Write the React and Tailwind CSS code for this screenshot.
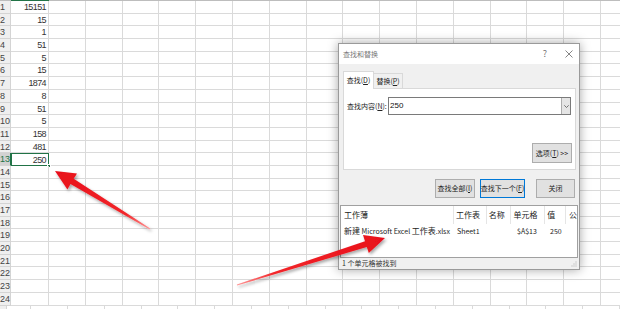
import React from "react";

const values = [15151, 15, 1, 51, 5, 15, 1874, 8, 51, 5, 158, 481, 250];
const rows = Array.from({ length: 24 }, (_, i) => i + 1);
const cols = Array.from({ length: 16 }, (_, i) => i);

const cjk = { fontFamily: '"Noto Sans CJK SC", "Liberation Sans", sans-serif' };

function Sheet() {
  return (
    <div className="flex flex-col">
      {/* column header strip, mostly cut off */}
      <div className="flex h-[1px] bg-[#bdbdbd]">
        <div className="w-[11px]" />
        <div className="w-[38px] bg-[#217346]" />
      </div>
      {rows.map((r) => {
        const sel = r === 13;
        return (
          <div key={r} className="flex h-[12.7px] shrink-0">
            <div
              className={`w-[11px] shrink-0 border-b border-r border-[#d4d4d4] text-[9px] leading-[12px] whitespace-nowrap ${
                sel ? "bg-[#d2d2d2] text-[#217346] border-r-[#217346]" : "bg-[#efefef] text-[#444]"
              }`}
            >
              {r}
            </div>
            <div
              className={`relative w-[38px] shrink-0 text-right pr-[2px] text-[9px] leading-[12px] tracking-[-0.6px] text-[#333] ${
                sel ? "border-[1.5px] border-[#217346]" : "border-b border-r border-[#dadada]"
              }`}
            >
              {values[r - 1] ?? ""}
              {sel && <div className="absolute -right-[3px] -bottom-[3px] w-[4px] h-[4px] bg-[#217346] border border-white" />}
            </div>
            {cols.map((c) => (
              <div key={c} className="w-[36.8px] shrink-0 border-b border-r border-[#dadada]" />
            ))}
          </div>
        );
      })}
      <div className="flex h-[12px]">
        <div className="w-[11px] bg-[#efefef] border-r border-[#d4d4d4]" />
        <div className="w-[38px] border-r border-[#dadada]" />
        {cols.map((c) => (
          <div key={c} className="w-[36.8px] shrink-0 border-r border-[#dadada]" />
        ))}
      </div>
    </div>
  );
}

function Btn({ children, primary, className = "" }) {
  return (
    <div
      className={`flex items-center justify-center h-[19px] whitespace-nowrap text-[7px] text-[#222] bg-[#e1e1e1] border ${
        primary ? "border-[#0078d7] border-[1.5px]" : "border-[#adadad]"
      } ${className}`}
    >
      {children}
    </div>
  );
}

function Dialog() {
  return (
    <div
      style={cjk}
      className="absolute left-[338px] top-[43px] w-[242px] h-[227px] flex flex-col bg-[#f0f0f0] border border-[#9a9a9a] shadow-[0_0_10px_rgba(0,0,0,0.35)]"
    >
      <div className="h-[20px] bg-white flex items-center pl-[4px] pr-[6px] text-[7px] text-[#777]">
        <span>查找和替换</span>
        <span className="ml-auto mr-[18px] text-[9px] text-[#777]">?</span>
        <svg width="8" height="8" viewBox="0 0 8 8" stroke="#777" strokeWidth="0.9">
          <path d="M0.5 0.5 L7.5 7.5 M7.5 0.5 L0.5 7.5" />
        </svg>
      </div>
      <div className="flex flex-col pl-[4px] pr-[3px]">
        <div className="flex items-end h-[24px]">
          <div className="relative z-10 h-[18px] w-[31px] whitespace-nowrap bg-white border border-b-0 border-[#d9d9d9] text-[7px] text-[#222] flex items-center justify-center -mb-[1px]">
            查找(<span className="underline">D</span>)
          </div>
          <div className="h-[15px] w-[29px] whitespace-nowrap border border-l-0 border-b-0 border-[#d9d9d9] text-[7px] text-[#222] flex items-center justify-center">
            替换(<span className="underline">P</span>)
          </div>
        </div>
        <div className="h-[82px] bg-white border border-[#d9d9d9] flex flex-col">
          <div className="flex items-center mt-[8px] pl-[3px] pr-[4px]">
            <span className="text-[7px] text-[#222] w-[41px] whitespace-nowrap">
              查找内容(<span className="underline">N</span>):
            </span>
            <div className="flex-1 h-[18px] border border-[#7a7a7a] flex items-center">
              <span className="pl-[1px] text-[8px] text-[#111]" style={{ fontFamily: '"Liberation Sans", sans-serif' }}>
                250
              </span>
              <div className="ml-auto h-full w-[9px] bg-[#e5e5e5] border-l border-[#adadad] flex items-center justify-center">
                <svg width="5" height="3" viewBox="0 0 5 3" fill="none" stroke="#555" strokeWidth="0.8">
                  <path d="M0.3 0.3 L2.5 2.5 L4.7 0.3" />
                </svg>
              </div>
            </div>
          </div>
          <div className="flex-1" />
          <div className="flex justify-end pr-[3px] pb-[6px]">
            <Btn className="w-[40px] h-[20px]">
              选项(<span className="underline">T</span>)&nbsp;&gt;&gt;
            </Btn>
          </div>
        </div>
        <div className="flex items-center justify-end gap-[5px] mt-[9px] pr-[1px]">
          <Btn className="w-[40px]">
            查找全部(<span className="underline">I</span>)
          </Btn>
          <Btn primary className="w-[45px] text-[6.5px]">
            查找下一个(<span className="underline">F</span>)
          </Btn>
          <Btn className="w-[39px] ml-[6px]">关闭</Btn>
        </div>
      </div>
      <div className="mt-[7px] mx-[1px] h-[53px] bg-white border border-[#a0a0a0] flex flex-col text-[8px] text-[#222]">
        <div className="flex h-[18px] items-center whitespace-nowrap">
          <div className="w-[114px] pl-[3px] border-r border-[#e5e5e5] h-full flex items-center">工作薄</div>
          <div className="w-[33px] pl-[2px] border-r border-[#e5e5e5] h-full flex items-center">工作表</div>
          <div className="w-[25px] pl-[2px] border-r border-[#e5e5e5] h-full flex items-center">名称</div>
          <div className="w-[34px] pl-[2px] border-r border-[#e5e5e5] h-full flex items-center">单元格</div>
          <div className="w-[21px] pl-[2px] border-r border-[#e5e5e5] h-full flex items-center">值</div>
          <div className="pl-[3px] h-full flex items-center">公</div>
        </div>
        <div className="flex h-[14px] items-center text-[7px] whitespace-nowrap">
          <div className="w-[114px] pl-[3px]">
            <span className="text-[8px]">新建</span> Microsoft Excel <span className="text-[8px]">工作表</span>.xlsx
          </div>
          <div className="w-[33px] pl-[2px]">Sheet1</div>
          <div className="w-[25px]" />
          <div className="w-[34px] pl-[4px]">$A$13</div>
          <div className="w-[21px] pl-[3px]">250</div>
        </div>
      </div>
      <div className="flex-1 flex items-center pl-[3px] text-[7px] text-[#333] relative whitespace-nowrap">
        1 个单元格被找到
        <svg className="absolute right-[2px] bottom-[2px]" width="6" height="6" viewBox="0 0 6 6" fill="#aaa">
          <rect x="4.5" y="0.5" width="1" height="1" />
          <rect x="2.5" y="2.5" width="1" height="1" />
          <rect x="4.5" y="2.5" width="1" height="1" />
          <rect x="0.5" y="4.5" width="1" height="1" />
          <rect x="2.5" y="4.5" width="1" height="1" />
          <rect x="4.5" y="4.5" width="1" height="1" />
        </svg>
      </div>
    </div>
  );
}

function Arrows() {
  return (
    <svg className="absolute left-0 top-0 pointer-events-none" width="620" height="309">
      <defs>
        <filter id="sh" x="-20%" y="-20%" width="140%" height="140%">
          <feDropShadow dx="1.5" dy="2" stdDeviation="1.5" floodColor="#000" floodOpacity="0.35" />
        </filter>
        <linearGradient id="g1" x1="150" y1="229" x2="55" y2="171" gradientUnits="userSpaceOnUse">
          <stop offset="0" stopColor="#ff9a9a" />
          <stop offset="0.25" stopColor="#f2262a" />
          <stop offset="1" stopColor="#e8101a" />
        </linearGradient>
        <linearGradient id="g2" x1="237" y1="285" x2="385" y2="238" gradientUnits="userSpaceOnUse">
          <stop offset="0" stopColor="#ff9a9a" />
          <stop offset="0.25" stopColor="#f2262a" />
          <stop offset="1" stopColor="#e8101a" />
        </linearGradient>
      </defs>
      <polygon
        filter="url(#sh)"
        fill="url(#g1)"
        points="55,171 77,173.5 73.7,178.8 150.3,228.6 149.7,229.4 70.5,184 67.4,189.5"
      />
      <polygon
        filter="url(#sh)"
        fill="url(#g2)"
        points="385,238 363,235 365,241.2 236.85,284.5 237.15,285.5 366.8,247 368.8,253"
      />
    </svg>
  );
}

export default function App() {
  return (
    <div
      className="relative w-[620px] h-[309px] overflow-hidden bg-white"
      style={{ fontFamily: '"Liberation Sans", "Noto Sans CJK SC", sans-serif' }}
    >
      <Sheet />
      <Dialog />
      <Arrows />
    </div>
  );
}
